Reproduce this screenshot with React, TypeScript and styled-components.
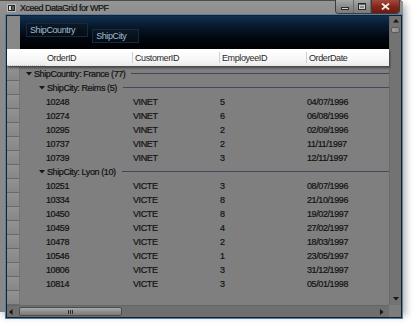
import React from 'react';
import styled, { createGlobalStyle } from 'styled-components';

const GlobalStyle = createGlobalStyle`
  html, body { margin: 0; padding: 0; background: #ffffff; }
  body { font-family: "Liberation Sans", Arial, sans-serif; }
  * { box-sizing: border-box; }
`;

const Page = styled.div`
  width: 417px;
  height: 326px;
  background: #ffffff;
  overflow: hidden;
`;

const Window = styled.div`
  width: 403px;
  height: 312px;
  display: flex;
  flex-direction: column;
  background: linear-gradient(#959595, #8b8b8b 18px, #888888);
  border-top: 1px solid #4c4c4c;
  border-radius: 0 4px 0 0;
  box-shadow: 3px 4px 7px rgba(0, 0, 0, 0.3);
`;

const TitleBar = styled.div`
  height: 17px;
  display: flex;
  align-items: center;
  padding-left: 7px;
`;

const TitleText = styled.span`
  margin-left: 4px;
  margin-top: 1px;
  font-size: 9px;
  letter-spacing: -0.5px;
  color: #111111;
  -webkit-text-stroke: 0.2px #111111;
`;

const WindowButtons = styled.div`
  margin-left: auto;
  margin-right: 3px;
  align-self: flex-start;
  margin-top: -1px;
  display: flex;
  height: 14px;
  border: 1px solid #3c3c3c;
  border-top: none;
  border-radius: 0 0 4px 4px;
  overflow: hidden;
`;

const WinButton = styled.div<{ $close?: boolean; $w: number }>`
  width: ${(p) => p.$w}px;
  height: 100%;
  display: flex;
  align-items: center;
  justify-content: center;
  border-left: ${(p) => (p.$close ? '1px solid #3c3c3c' : 'none')};
  border-right: ${(p) => (p.$close ? 'none' : '1px solid #6a6a6a')};
  background: ${(p) =>
    p.$close
      ? 'linear-gradient(#a34a3c, #86261a 50%, #6c1b12)'
      : 'linear-gradient(#a6a6a6, #8c8c8c 50%, #7a7a7a)'};
`;

const ClientFrame = styled.div`
  flex: 1;
  margin: 0 0 2px 5px;
  border: 1px solid #4f80b3;
  padding: 1px;
  background: #1f1f1f;
  display: flex;
`;

const Inner = styled.div`
  flex: 1;
  display: grid;
  grid-template-columns: 1fr 12px;
  grid-template-rows: 1fr 12px;
  background: #7f7f7f;
`;

const Main = styled.div`
  display: flex;
  flex-direction: column;
  min-width: 0;
`;

const TopRow = styled.div`
  height: 33px;
  display: flex;
`;

const Gutter = styled.div`
  width: 13px;
  background: #888888;
  flex-shrink: 0;
`;

const GroupPanel = styled.div`
  flex: 1;
  display: flex;
  align-items: flex-start;
  gap: 4px;
  padding: 7px 6px;
  background: linear-gradient(#113050, #071a2c 30%, #020710 65%, #000000);
`;

const Chip = styled.div<{ $offset: number }>`
  margin-top: ${(p) => p.$offset}px;
  height: 14px;
  display: flex;
  align-items: center;
  padding: 0 12px 0 3px;
  font-size: 9px;
  letter-spacing: -0.4px;
  color: #a3bcd2;
  background: linear-gradient(#0b1826, #050c14);
  border: 1px solid #16293d;
`;

const HeaderRow = styled.div`
  height: 17px;
  display: flex;
  align-items: center;
  background: linear-gradient(#ffffff, #f7f7f7 60%, #ebebeb);
  box-shadow: 1px 2px 2px rgba(0, 0, 0, 0.45);
  position: relative;
  z-index: 1;
`;

const HeaderGutter = styled.div`
  width: 38px;
  height: 100%;
  flex-shrink: 0;
  border-bottom: 1px dotted #c4c4c4;
`;

const HeaderCell = styled.div<{ $first?: boolean; $last?: boolean }>`
  width: ${(p) => (p.$last ? 'auto' : '87px')};
  flex: ${(p) => (p.$last ? '1' : 'none')};
  height: 11px;
  display: flex;
  align-items: center;
  padding-left: 2px;
  font-size: 9px;
  letter-spacing: -0.4px;
  color: #2a2a2a;
  border-left: ${(p) => (p.$first ? 'none' : '1px solid #cfcfcf')};
`;

const Body = styled.div`
  flex: 1;
  display: flex;
  padding-top: 1px;
  overflow: hidden;
`;

const SelectorColumn = styled.div`
  width: 13px;
  flex-shrink: 0;
  display: flex;
  flex-direction: column;
  background: #888888;
`;

const SelectorCell = styled.div`
  height: 14px;
  flex-shrink: 0;
  background: linear-gradient(#929292, #878787);
  border-bottom: 1px solid #6a6a6a;
  border-right: 1px solid #767676;
`;

const Rows = styled.div`
  flex: 1;
  display: flex;
  flex-direction: column;
  min-width: 0;
`;

const GroupRow = styled.div<{ $level: number }>`
  height: 14px;
  flex-shrink: 0;
  display: flex;
  align-items: center;
  padding-left: ${(p) => 6 + p.$level * 13}px;
`;

const GroupLabel = styled.span`
  margin-left: 2px;
  font-size: 9px;
  letter-spacing: -0.4px;
  color: #121212;
  -webkit-text-stroke: 0.2px #121212;
  white-space: nowrap;
`;

const GroupLine = styled.div`
  flex: 1;
  height: 1px;
  margin-left: 6px;
  margin-top: -1px;
  background: #3e4a5a;
`;

const DataRow = styled.div`
  height: 14px;
  flex-shrink: 0;
  display: flex;
  align-items: center;
  padding-left: 25px;
`;

const DataCell = styled.div<{ $last?: boolean }>`
  width: ${(p) => (p.$last ? 'auto' : '87px')};
  flex: ${(p) => (p.$last ? '1' : 'none')};
  padding-left: 1px;
  font-size: 9px;
  letter-spacing: -0.4px;
  color: #121212;
  -webkit-text-stroke: 0.2px #121212;
  white-space: nowrap;
`;

const VScroll = styled.div`
  display: flex;
  flex-direction: column;
  align-items: center;
  background: #737373;
  border-left: 1px solid #6a6a6a;
  padding: 3px 0 4px;
`;

const VThumb = styled.div`
  width: 9px;
  height: 6px;
  margin-top: 4px;
  border: 1px solid #5a5a5a;
  border-radius: 2px;
  background: linear-gradient(90deg, #a2a2a2, #8a8a8a);
`;

const Spacer = styled.div`
  flex: 1;
`;

const HScroll = styled.div`
  display: flex;
  align-items: center;
  background: #6f6f6f;
  border-top: 1px solid #666666;
  padding: 0 5px 0 2px;
`;

const HThumb = styled.div`
  width: 103px;
  height: 9px;
  margin-left: 6px;
  display: flex;
  align-items: center;
  justify-content: center;
  gap: 1px;
  border: 1px solid #4c4c4c;
  border-radius: 2px;
  background: linear-gradient(#a9a9a9, #8e8e8e 50%, #7a7a7a);
`;

const Grip = styled.div`
  width: 1px;
  height: 4px;
  background: #2e2e2e;
`;

const Corner = styled.div`
  background: #7c7c7c;
`;

const Arrow = ({ dir, color = '#161616' }: { dir: 'up' | 'down' | 'left' | 'right'; color?: string }) => {
  const pts: Record<string, string> = {
    down: '0,0 6,0 3,3.5',
    up: '0,3.5 6,3.5 3,0',
    left: '3.5,0 3.5,6 0,3',
    right: '0,0 0,6 3.5,3',
  };
  const vertical = dir === 'up' || dir === 'down';
  return (
    <svg width={vertical ? 6 : 4} height={vertical ? 4 : 6} viewBox={vertical ? '0 0 6 4' : '0 0 4 6'}>
      <polygon points={pts[dir]} fill={color} />
    </svg>
  );
};

const AppIcon = () => (
  <svg width="9" height="8" viewBox="0 0 9 8">
    <rect x="0.5" y="0.5" width="8" height="7" fill="#2a2a2a" stroke="#b8b8b8" />
    <rect x="2" y="2" width="2" height="4" fill="#d8d8d8" />
    <rect x="5" y="2" width="2" height="4" fill="#5a5a5a" />
  </svg>
);

const reims = [
  ['10248', 'VINET', '5', '04/07/1996'],
  ['10274', 'VINET', '6', '06/08/1996'],
  ['10295', 'VINET', '2', '02/09/1996'],
  ['10737', 'VINET', '2', '11/11/1997'],
  ['10739', 'VINET', '3', '12/11/1997'],
];

const lyon = [
  ['10251', 'VICTE', '3', '08/07/1996'],
  ['10334', 'VICTE', '8', '21/10/1996'],
  ['10450', 'VICTE', '8', '19/02/1997'],
  ['10459', 'VICTE', '4', '27/02/1997'],
  ['10478', 'VICTE', '2', '18/03/1997'],
  ['10546', 'VICTE', '1', '23/05/1997'],
  ['10806', 'VICTE', '3', '31/12/1997'],
  ['10814', 'VICTE', '3', '05/01/1998'],
];

const Group = ({ level, label }: { level: number; label: string }) => (
  <GroupRow $level={level}>
    <Arrow dir="down" />
    <GroupLabel>{label}</GroupLabel>
    <GroupLine />
  </GroupRow>
);

const Data = ({ cells }: { cells: string[] }) => (
  <DataRow>
    {cells.map((c, i) => (
      <DataCell key={i} $last={i === cells.length - 1}>
        {c}
      </DataCell>
    ))}
  </DataRow>
);

export default function App() {
  const headers = ['OrderID', 'CustomerID', 'EmployeeID', 'OrderDate'];
  return (
    <>
      <GlobalStyle />
      <Page>
        <Window>
          <TitleBar>
            <AppIcon />
            <TitleText>Xceed DataGrid for WPF</TitleText>
            <WindowButtons>
              <WinButton $w={18}>
                <svg width="8" height="9" viewBox="0 0 8 9">
                  <rect x="0.5" y="5.5" width="7" height="2" fill="#d0d0d0" stroke="#2a2a2a" />
                </svg>
              </WinButton>
              <WinButton $w={17}>
                <svg width="8" height="7" viewBox="0 0 8 7">
                  <rect x="0.5" y="0.5" width="7" height="6" fill="none" stroke="#2a2a2a" />
                  <rect x="1.5" y="1.5" width="5" height="1" fill="#2a2a2a" />
                  <rect x="1.5" y="2.5" width="5" height="3" fill="none" stroke="#cfcfcf" />
                </svg>
              </WinButton>
              <WinButton $w={28} $close>
                <svg width="9" height="7" viewBox="0 0 9 7">
                  <path d="M1 0.5 L8 6.5 M8 0.5 L1 6.5" stroke="#f2e8e6" strokeWidth="1.8" />
                </svg>
              </WinButton>
            </WindowButtons>
          </TitleBar>
          <ClientFrame>
            <Inner>
              <Main>
                <TopRow>
                  <Gutter />
                  <GroupPanel>
                    <Chip $offset={0}>ShipCountry</Chip>
                    <Chip $offset={6}>ShipCity</Chip>
                  </GroupPanel>
                </TopRow>
                <HeaderRow>
                  <HeaderGutter />
                  {headers.map((h, i) => (
                    <HeaderCell key={h} $first={i === 0} $last={i === headers.length - 1}>
                      {h}
                    </HeaderCell>
                  ))}
                </HeaderRow>
                <Body>
                  <SelectorColumn>
                    {Array.from({ length: 17 }).map((_, i) => (
                      <SelectorCell key={i} />
                    ))}
                  </SelectorColumn>
                  <Rows>
                    <Group level={0} label="ShipCountry: France (77)" />
                    <Group level={1} label="ShipCity: Reims (5)" />
                    {reims.map((r) => (
                      <Data key={r[0]} cells={r} />
                    ))}
                    <Group level={1} label="ShipCity: Lyon (10)" />
                    {lyon.map((r) => (
                      <Data key={r[0]} cells={r} />
                    ))}
                  </Rows>
                </Body>
              </Main>
              <VScroll>
                <Arrow dir="up" />
                <VThumb />
                <Spacer />
                <Arrow dir="down" />
              </VScroll>
              <HScroll>
                <Arrow dir="left" />
                <HThumb>
                  <Grip />
                  <Grip />
                  <Grip />
                </HThumb>
                <Spacer />
                <Arrow dir="right" />
              </HScroll>
              <Corner />
            </Inner>
          </ClientFrame>
        </Window>
      </Page>
    </>
  );
}
